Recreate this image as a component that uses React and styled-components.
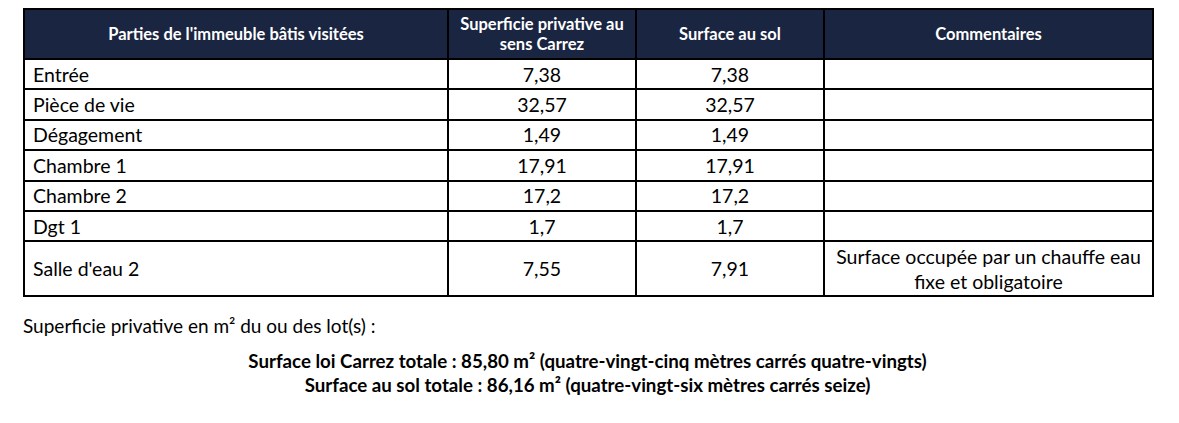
import React from 'react';
import styled, { createGlobalStyle } from 'styled-components';

const GlobalStyle = createGlobalStyle`
  body {
    margin: 0;
    background: #fff;
    font-family: Lato, "Open Sans", sans-serif;
    color: #000;
  }
`;

const Page = styled.div`
  width: 1179px;
  height: 423px;
  padding: 8px 27px 0 23px;
  box-sizing: border-box;
`;

const Table = styled.table`
  width: 1129px;
  border-collapse: collapse;
  table-layout: fixed;
`;

const Head = styled.th`
  background: #1a2541;
  color: #fff;
  font-size: 16.5px;
  font-weight: 700;
  line-height: 20px;
  height: 48px;
  padding: 0 10px;
  border: 2px solid #000;
  text-align: center;
  vertical-align: middle;
`;

const Cell = styled.td`
  border: 2px solid #000;
  font-size: 19.5px;
  line-height: 25px;
  height: ${(p) => (p.$tall ? '53px' : '28.4px')};
  padding: 0 8px;
  text-align: ${(p) => (p.$left ? 'left' : 'center')};
  vertical-align: middle;
`;

const Note = styled.p`
  margin: 17px 0 0;
  font-size: 19px;
  line-height: 24px;
`;

const Totals = styled.div`
  width: 1129px;
  margin-top: 11px;
  text-align: center;
  font-weight: 700;
  font-size: 18.7px;
  line-height: 24px;
`;

const rows = [
  ['Entrée', '7,38', '7,38', ''],
  ['Pièce de vie', '32,57', '32,57', ''],
  ['Dégagement', '1,49', '1,49', ''],
  ['Chambre 1', '17,91', '17,91', ''],
  ['Chambre 2', '17,2', '17,2', ''],
  ['Dgt 1', '1,7', '1,7', ''],
  ['Salle d\'eau 2', '7,55', '7,91', 'Surface occupée par un chauffe eau fixe et obligatoire'],
];

export default function App() {
  return (
    <Page>
      <GlobalStyle />
      <Table>
        <colgroup>
          <col style={{ width: 424 }} />
          <col style={{ width: 188 }} />
          <col style={{ width: 188 }} />
          <col style={{ width: 329 }} />
        </colgroup>
        <thead>
          <tr>
            <Head>Parties de l'immeuble bâtis visitées</Head>
            <Head>Superficie privative au sens Carrez</Head>
            <Head>Surface au sol</Head>
            <Head>Commentaires</Head>
          </tr>
        </thead>
        <tbody>
          {rows.map(([name, carrez, sol, comment]) => (
            <tr key={name}>
              <Cell $left $tall={!!comment}>{name}</Cell>
              <Cell>{carrez}</Cell>
              <Cell>{sol}</Cell>
              <Cell>{comment}</Cell>
            </tr>
          ))}
        </tbody>
      </Table>
      <Note>Superficie privative en m² du ou des lot(s) :</Note>
      <Totals>
        <div>Surface loi Carrez totale : 85,80 m² (quatre-vingt-cinq mètres carrés quatre-vingts)</div>
        <div>Surface au sol totale : 86,16 m² (quatre-vingt-six mètres carrés seize)</div>
      </Totals>
    </Page>
  );
}
